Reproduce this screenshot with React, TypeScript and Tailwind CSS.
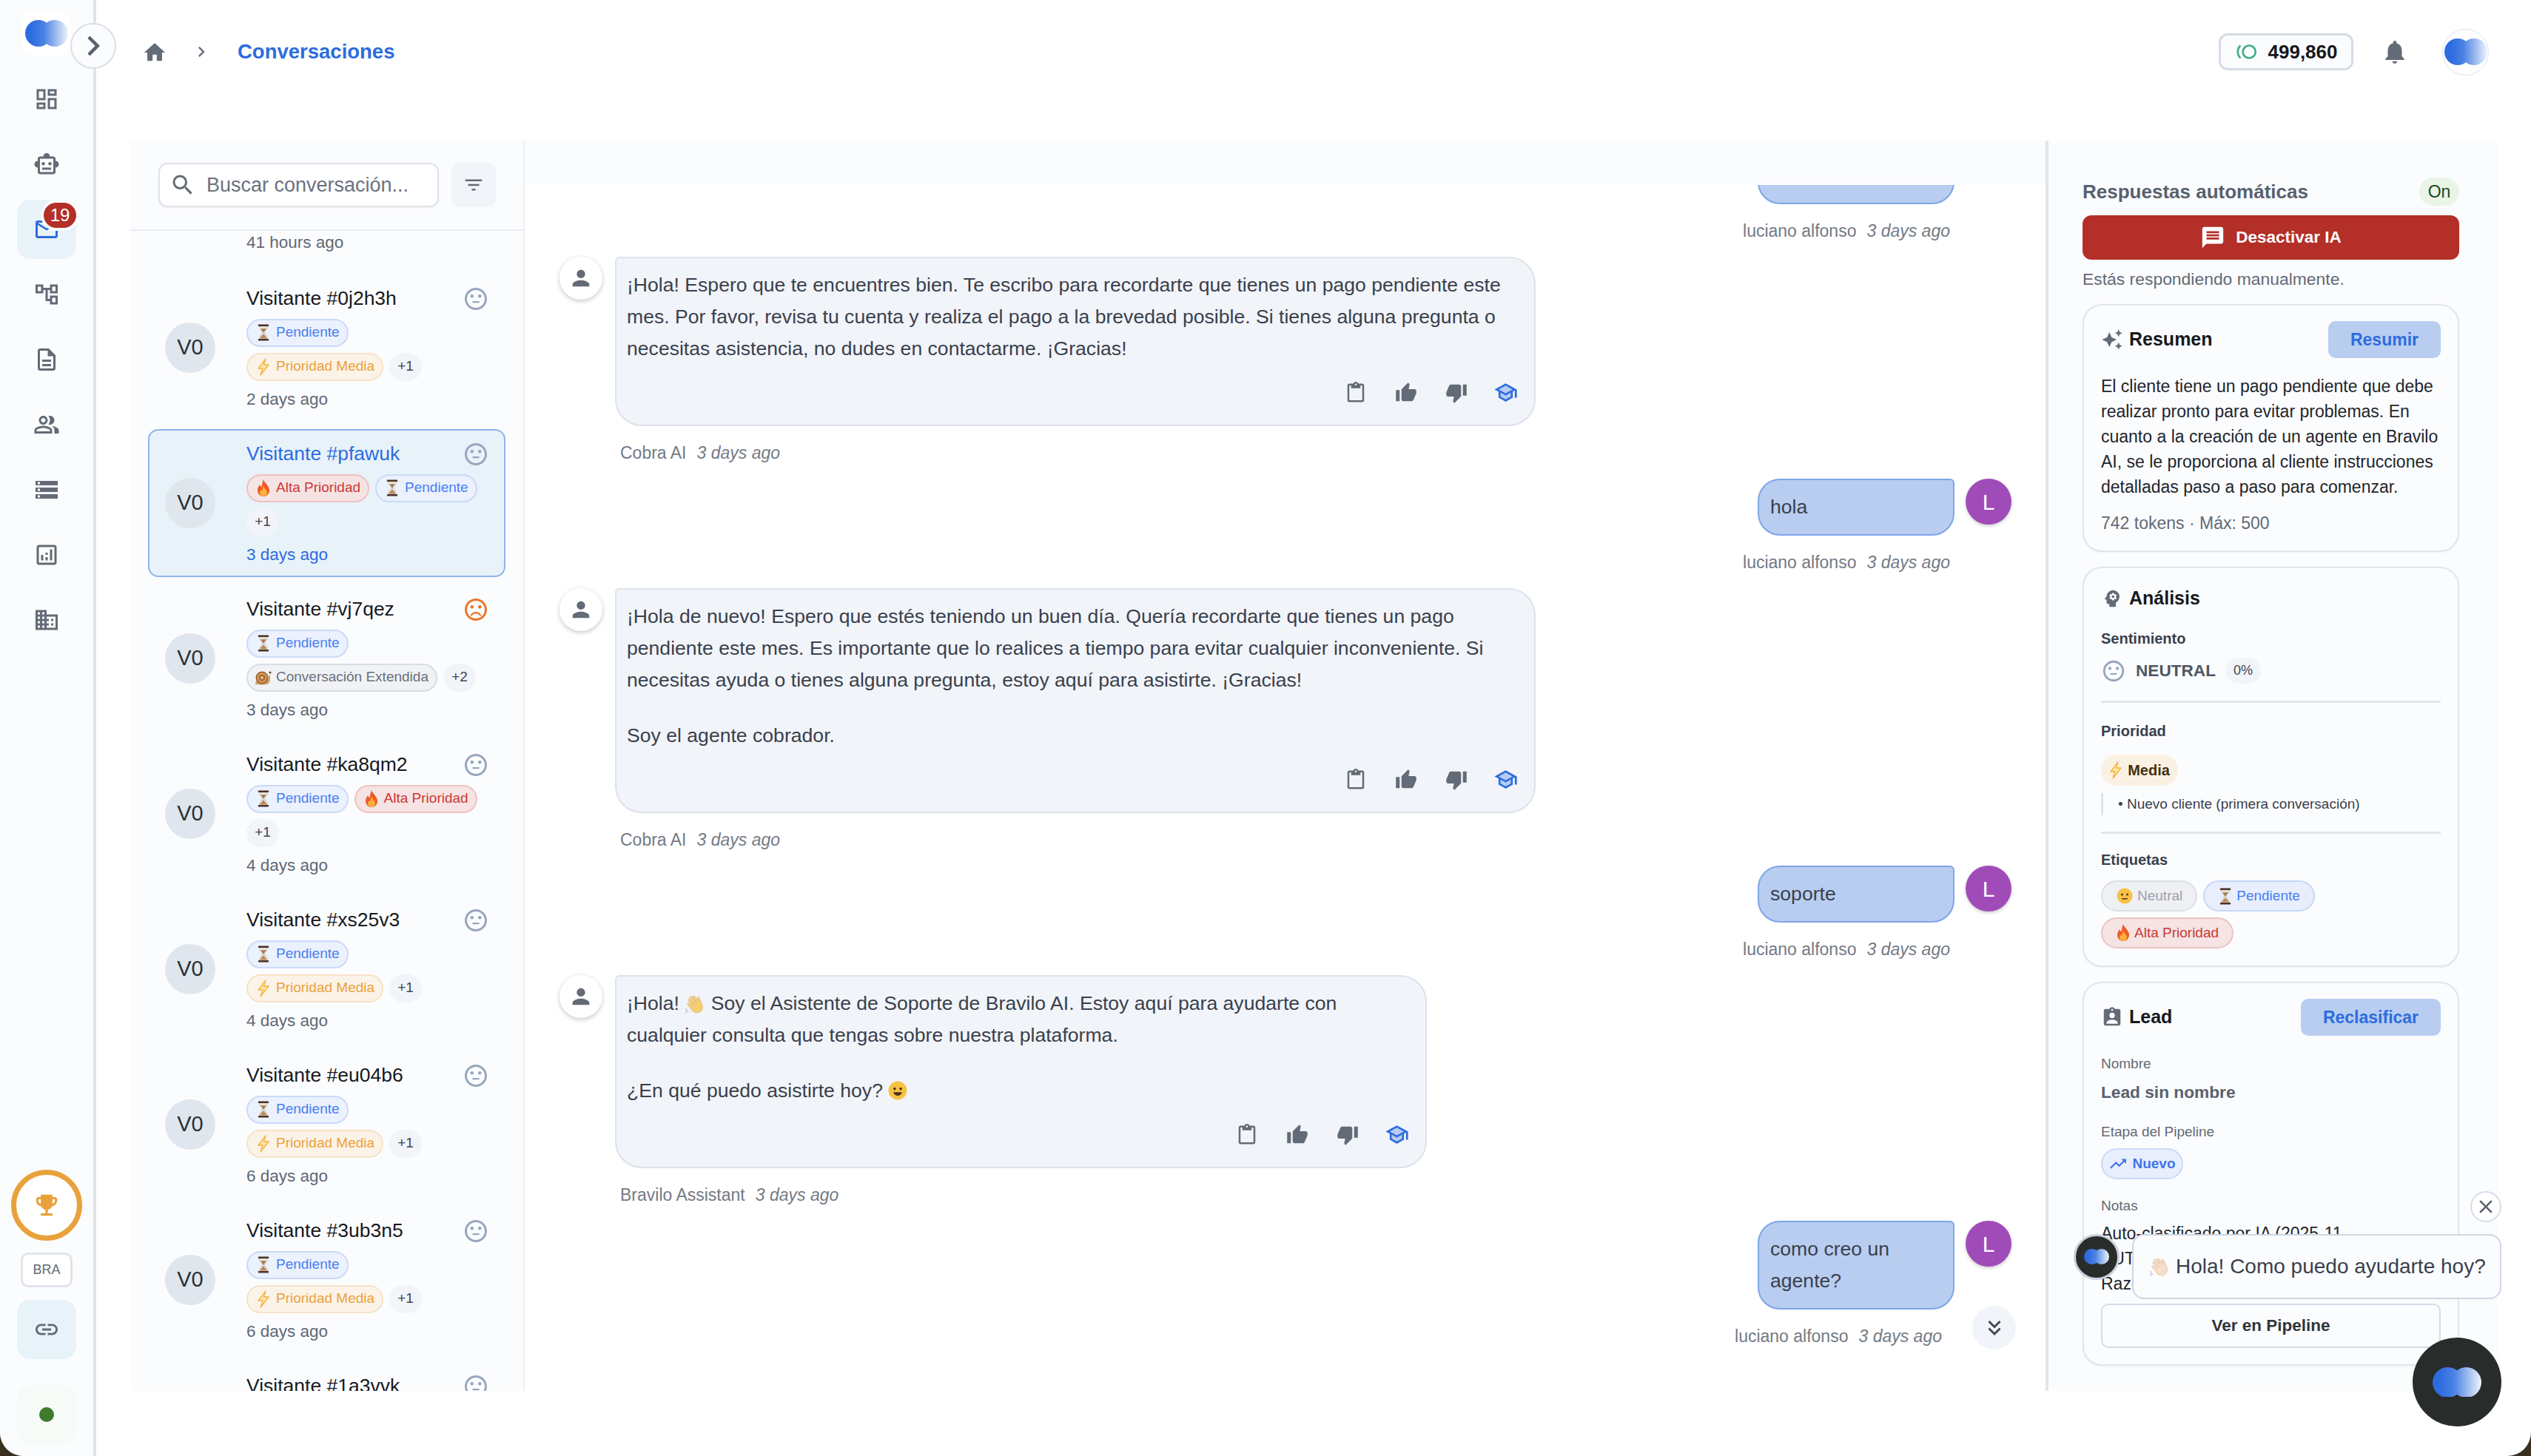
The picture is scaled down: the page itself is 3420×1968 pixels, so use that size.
import React from 'react';
import {
  MdOutlineDashboard, MdOutlineSmartToy, MdMailOutline, MdOutlineAccountTree, MdOutlineDescription,
  MdOutlinePeopleAlt, MdStorage, MdOutlineAnalytics, MdOutlineBusiness, MdHome, MdChevronRight,
  MdSearch, MdFilterList, MdOutlineSentimentNeutral, MdOutlineSentimentDissatisfied, MdNotifications,
  MdPerson, MdOutlineContentPaste, MdThumbUp, MdThumbDown, MdMessage, MdAutoAwesome,
  MdPsychology, MdAssignmentInd, MdTrendingUp, MdKeyboardDoubleArrowDown, MdEmojiEvents, MdLink, MdClose,
} from 'react-icons/md';

function Logo({ w = 58 }: { w?: number }) {
  const id = `logo-${w}`;
  return (
    <svg width={w} height={(w * 36) / 58} viewBox="0 0 58 36">
      <defs>
        <linearGradient id={id} gradientUnits="userSpaceOnUse" x1="8" y1="0" x2="58" y2="0">
          <stop offset="0" stopColor="#2d6cdf" />
          <stop offset="0.35" stopColor="#4a82e4" />
          <stop offset="1" stopColor="#eef3fb" />
        </linearGradient>
      </defs>
      <circle cx="18" cy="18" r="18" fill={`url(#${id})`} />
      <circle cx="40" cy="18" r="18" fill={`url(#${id})`} />
    </svg>
  );
}

// two-tone cap, the outlined icon with a pale fill under it
function SchoolIcon() {
  return (
    <svg width="33" height="33" viewBox="0 0 24 24" className="-ml-[3px] shrink-0">
      <path d="M7 12.27v3.72l5 2.73 5-2.73v-3.72L12 15zM12 5.28 5.18 9 12 12.72 18.82 9z" fill="#2d6cdf" opacity="0.3" />
      <path d="M12 3 1 9l4 2.18v6L12 21l7-3.82v-6l2-1.09V17h2V9L12 3zm6.82 6L12 12.72 5.18 9 12 5.28 18.82 9zM17 15.99l-5 2.73-5-2.73v-3.72L12 15l5-2.73v3.72z" fill="#2d6cdf" />
    </svg>
  );
}

function Hourglass() {
  return (
    <svg width="16" height="23" viewBox="0 0 18 26" className="shrink-0">
      <path d="M3 3h12c0 6-4 7-4.5 10 .5 3 4.5 4 4.5 10H3c0-6 4-7 4.5-10C7 10 3 9 3 3z" fill="#e8e4da" stroke="#b9b2a5" strokeWidth="0.8" />
      <path d="M5 7h8c-.8 2.500-3 3.500-3.500 6h-1C8 10.500 5.800 9.500 5 7z" fill="#a9794a" />
      <path d="M9 14c.4 3 4.500 4.500 5 8H4c.5-3.500 4.600-5 5-8z" fill="#b98a58" />
      <rect x="1" y="0.500" width="16" height="3" rx="1" fill="#4a3226" />
      <rect x="1" y="22.500" width="16" height="3" rx="1" fill="#4a3226" />
    </svg>
  );
}

function Bolt() {
  return (
    <svg width="18" height="24" viewBox="0 0 18 24" className="shrink-0">
      <path d="M12 1 2 14h6l-3 9 11-14h-6.500L12 1z" fill="#fde6a8" stroke="#f4b23e" strokeWidth="1.300" strokeLinejoin="round" />
    </svg>
  );
}

function Flame() {
  return (
    <svg width="18" height="24" viewBox="0 0 18 24" className="shrink-0">
      <path d="M9 0c1 5 8 8 8 15a8 8 0 0 1-16 0c0-4 2-6 3-8 .5 2 1.500 3 2.500 3C7.500 7 7.500 3 9 0z" fill="#ee5a24" />
      <path d="M9 9c.5 3 5 5 5 9a5 5 0 0 1-10 0c0-2 1-3 2-4 .5 1 1 1.500 1.500 1.500C7.500 13 8 11 9 9z" fill="#fbb03b" />
    </svg>
  );
}

function Snail() {
  return (
    <svg width="24" height="22" viewBox="0 0 24 22" className="shrink-0">
      <path d="M1 20c6 1 15 1 18-1 2-2 2-7 2-11h-2c0 4-1 6-3 7H2z" fill="#c9a06a" />
      <circle cx="10" cy="11" r="8.500" fill="#a8692f" />
      <circle cx="10" cy="11" r="5.500" fill="none" stroke="#e2b67c" strokeWidth="1.400" />
      <circle cx="10" cy="11" r="2.200" fill="#e2b67c" />
      <circle cx="21" cy="4" r="1.500" fill="#5b4026" />
    </svg>
  );
}

function FaceEmoji({ smile, size = 22 }: { smile?: boolean; size?: number }) {
  return (
    <svg width={size} height={size} viewBox="0 0 22 22" className="inline-block shrink-0 align-[-4px]">
      <circle cx="11" cy="11" r="10.500" fill="#f8c144" />
      <circle cx="7.500" cy="9" r="1.500" fill="#4a3220" />
      <circle cx="14.500" cy="9" r="1.500" fill="#4a3220" />
      {smile
        ? <path d="M6 13c1 3 3 4 5 4s4-1 5-4z" fill="#4a3220" />
        : <rect x="7" y="14" width="8" height="1.600" rx="0.800" fill="#4a3220" />}
    </svg>
  );
}

function WaveHand({ color = '#f6cc73', size = 28 }: { color?: string; size?: number }) {
  return (
    <svg width={size} height={size} viewBox="0 0 28 28" className="inline-block shrink-0 align-[-6px]">
      <path d="M7 6c-1-1.500 1-3 2.500-1.500L15 11l-4-6c-1-1.500 1.500-3 2.500-1.500L19 11l-2-5c-.6-1.600 1.800-2.600 2.500-1L24 15c2 6-2 11-7 11-4 0-6-2-9-6l-4-5c-1-1.500 1-3 2.500-1.700L11 17 5 9.500C4 8 6 6.500 7 8l6 6.500z" fill={color} stroke="#d9b48a" strokeWidth="0.600" />
      <path d="M2 20c.5 2 1.500 3.500 3 5M1 24c.4 1 1 1.500 2 2.500" stroke="#9aa3ad" strokeWidth="1" fill="none" />
    </svg>
  );
}

type ChipKind = 'pending' | 'media' | 'alta' | 'extended';

const chipStyles: Record<ChipKind, string> = {
  pending: 'bg-[#ebf1fd] border-[#cbdaf8] text-[#4a7df0]',
  media: 'bg-[#fbf3e8] border-[#f7e2c6] text-[#eca139]',
  alta: 'bg-[#f6e3e4] border-[#eec2c2] text-[#c93a35]',
  extended: 'bg-[#f1f2f5] border-[#d9dce2] text-[#68707c]',
};

const chipLabels: Record<ChipKind, string> = {
  pending: 'Pendiente',
  media: 'Prioridad Media',
  alta: 'Alta Prioridad',
  extended: 'Conversación Extendida',
};

function ChipIcon({ kind }: { kind: ChipKind }) {
  if (kind === 'pending') return <Hourglass />;
  if (kind === 'media') return <Bolt />;
  if (kind === 'alta') return <Flame />;
  return <Snail />;
}

function Chip({ kind }: { kind: ChipKind }) {
  return (
    <span className={`flex h-[38px] items-center gap-[6px] rounded-full border-2 pl-[10px] pr-[10px] text-[19px] whitespace-nowrap ${chipStyles[kind]}`}>
      <span className="flex w-[22px] justify-center"><ChipIcon kind={kind} /></span>
      {chipLabels[kind]}
    </span>
  );
}

type Conv = { id: string; chips: ChipKind[]; more: string; ago: string; mood?: 'sad'; active?: boolean };

const conversations: Conv[] = [
  { id: '0j2h3h', chips: ['pending', 'media'], more: '+1', ago: '2 days ago' },
  { id: 'pfawuk', chips: ['alta', 'pending'], more: '+1', ago: '3 days ago', active: true },
  { id: 'vj7qez', chips: ['pending', 'extended'], more: '+2', ago: '3 days ago', mood: 'sad' },
  { id: 'ka8qm2', chips: ['pending', 'alta'], more: '+1', ago: '4 days ago' },
  { id: 'xs25v3', chips: ['pending', 'media'], more: '+1', ago: '4 days ago' },
  { id: 'eu04b6', chips: ['pending', 'media'], more: '+1', ago: '6 days ago' },
  { id: '3ub3n5', chips: ['pending', 'media'], more: '+1', ago: '6 days ago' },
  { id: '1a3vvk', chips: ['pending', 'media'], more: '+1', ago: '6 days ago' },
];

function ConversationItem({ c }: { c: Conv }) {
  const Mood = c.mood === 'sad' ? MdOutlineSentimentDissatisfied : MdOutlineSentimentNeutral;
  return (
    <div className={`mx-[24px] mb-[10px] flex h-[200px] shrink-0 items-center rounded-[14px] border-2 pl-[21px] pr-[20px] ${c.active ? 'border-[#8fb4ec] bg-[#e8f2f9]' : 'border-transparent'}`}>
      <div className="flex size-[68px] shrink-0 items-center justify-center rounded-full bg-[#e0e6ed] text-[29px] font-medium text-[#2b3038]">V0</div>
      <div className="ml-[42px] min-w-0 flex-1 pt-[4px]">
        <div className="flex h-[30px] items-center justify-between">
          <span className={`text-[26.5px] ${c.active ? 'text-[#2d6cdf]' : 'text-[#17191d]'}`}>Visitante #{c.id}</span>
          <Mood size={36} className={c.mood === 'sad' ? 'text-[#e9762b]' : 'text-[#97a6bd]'} />
        </div>
        <div className="mt-[12px] flex flex-wrap gap-[8px]">
          {c.chips.map((k) => <Chip key={k} kind={k} />)}
          <span className="flex h-[38px] w-[44px] items-center justify-center rounded-full bg-[#f1f4f9] text-[19px] text-[#3f4650]">{c.more}</span>
        </div>
        <div className={`mt-[9px] text-[22.5px] leading-[32px] ${c.active ? 'text-[#2d6cdf]' : 'text-[#5f6875]'}`}>{c.ago}</div>
      </div>
    </div>
  );
}

function BotMessage({ author, width, children }: { author: string; width: string; children: React.ReactNode }) {
  return (
    <div className="flex shrink-0 items-start gap-[17px]">
      <div className="flex size-[58px] shrink-0 items-center justify-center rounded-full bg-white shadow-[0_2px_6px_rgba(0,0,0,0.22)]">
        <MdPerson size={34} className="text-[#636b76]" />
      </div>
      <div>
        <div className={`rounded-[36px] rounded-tl-[6px] border-2 border-[#dde2ea] bg-[#f1f4f9] pb-[27px] pl-[14px] pr-[22px] pt-[15px] text-[26.6px] leading-[43px] text-[#3a404c] ${width}`}>
          {children}
          <div className="mt-[21px] flex items-center justify-end gap-[38px] text-[#636b76]">
            <MdOutlineContentPaste size={30} />
            <MdThumbUp size={30} />
            <MdThumbDown size={30} />
            <SchoolIcon />
          </div>
        </div>
        <div className="mb-[20px] ml-[7px] mt-[21px] h-[30px] text-[23px] leading-[30px] text-[#737a85]">
          {author}<i className="ml-[14px]">3 days ago</i>
        </div>
      </div>
    </div>
  );
}

function UserMessage({ children, shifted, noAvatar }: { children?: React.ReactNode; shifted?: boolean; noAvatar?: boolean }) {
  return (
    <div className="shrink-0">
      <div className="flex items-start justify-end gap-[15px]">
        <div className="w-[266px] rounded-[30px] rounded-tr-[6px] border-2 border-[#7ea5e8] bg-[#b8cdf0] px-[15px] py-[15px] text-[26.6px] leading-[43px] text-[#3a404c]">{children}</div>
        <div className={`flex size-[62px] items-center justify-center rounded-full text-[30px] text-white ${noAvatar ? '' : 'bg-[#a04cb8] shadow-[0_2px_4px_rgba(0,0,0,0.2)]'}`}>{noAvatar ? '' : 'L'}</div>
      </div>
      <div className={`mb-[20px] mt-[21px] h-[30px] text-right text-[23px] leading-[30px] text-[#737a85] ${shifted ? 'pr-[94px]' : 'pr-[83px]'}`}>
        luciano alfonso<i className="ml-[14px]">3 days ago</i>
      </div>
    </div>
  );
}

function Card({ children }: { children: React.ReactNode }) {
  return <div className="mt-[20px] shrink-0 rounded-[26px] border-2 border-[#e1e5ec] bg-[#fbfcfe] px-[23px] shadow-[0_1px_3px_rgba(0,0,0,0.05)]">{children}</div>;
}

const navIcons = [
  MdOutlineDashboard, MdOutlineSmartToy, MdMailOutline, MdOutlineAccountTree, MdOutlineDescription,
  MdOutlinePeopleAlt, MdStorage, MdOutlineAnalytics, MdOutlineBusiness,
];

export default function App() {
  return (
    <div className="relative h-screen w-screen overflow-hidden bg-[#3a3020] font-['Liberation_Sans',sans-serif]">
      <div className="flex h-full w-full overflow-hidden rounded-b-[32px] bg-white">
        {/* Sidebar */}
        <aside className="relative flex w-[130px] shrink-0 flex-col items-center border-r-[4px] border-[#e0e3e8] bg-[#fbfcfe]">
          <div className="mt-[14px] flex h-[62px] w-[66px] items-center justify-center rounded-[16px] bg-white"><Logo /></div>
          <div className="mt-[18px] flex flex-col gap-[8px]">
            {navIcons.map((Icon, i) => (
              <div key={i} className={`relative flex size-[80px] items-center justify-center rounded-[18px] ${i === 2 ? 'bg-[#e8f2f9] text-[#2d6cdf]' : 'text-[#636b76]'}`}>
                <Icon size={36} />
                {i === 2 && (
                  <span className="absolute right-0 top-[4px] flex h-[34px] w-[44px] items-center justify-center rounded-full bg-[#b32f28] text-[24px] text-white ring-4 ring-[#fbfcfe]">19</span>
                )}
              </div>
            ))}
          </div>
          <div className="mt-auto flex flex-col items-center pb-[16px]">
            <div className="flex size-[96px] items-center justify-center rounded-full border-[7px] border-[#e9a23b] bg-white">
              <MdEmojiEvents size={38} className="text-[#e9a23b]" />
            </div>
            <div className="mt-[16px] flex h-[47px] w-[70px] items-center justify-center rounded-[10px] border-[3px] border-[#e1e4e9] bg-white text-[18px] text-[#636b76]">BRA</div>
            <div className="mt-[17px] flex size-[80px] items-center justify-center rounded-[18px] bg-[#e8f2f9]">
              <MdLink size={36} className="text-[#636b76]" />
            </div>
            <div className="mt-[35px] flex size-[80px] items-center justify-center rounded-[18px] bg-[#f7fbf7]">
              <span className="size-[20px] rounded-full bg-[#3f7a2f]" />
            </div>
          </div>
          <button className="absolute left-[95px] top-[31px] flex size-[62px] items-center justify-center rounded-full border-2 border-[#dcdfe4] bg-[#fbfcfe] text-[#5b636e]">
            <MdChevronRight size={54} />
          </button>
        </aside>

        <div className="flex min-w-0 flex-1 flex-col pl-[46px] pr-[45px]">
          {/* Top bar */}
          <header className="flex h-[190px] shrink-0 items-start">
            <div className="flex h-[140px] flex-1 items-center text-[#636b76]">
              <MdHome size={34} className="ml-[16px] mt-[2px]" />
              <MdChevronRight size={28} className="ml-[32px]" />
              <span className="ml-[35px] text-[27.5px] font-bold text-[#2d6cdf]">Conversaciones</span>
            </div>
            <div className="flex h-[140px] items-center">
              <div className="flex h-[50px] w-[182px] items-center justify-center gap-[13px] rounded-[12px] border-[3px] border-[#d6dce6] bg-[#fbfcfe] text-[26px] font-bold text-[#16181c]">
                <svg width="32" height="22" viewBox="0 0 30 20">
                  <circle cx="18" cy="10" r="8" fill="none" stroke="#3fae84" strokeWidth="2.500" />
                  <path d="M7 2a11 11 0 0 0 0 16" fill="none" stroke="#3fae84" strokeWidth="2.500" />
                </svg>
                499,860
              </div>
              <MdNotifications size={38} className="ml-[37px] text-[#636b76]" />
              <div className="ml-[45px] mr-[12px] flex size-[63px] items-center justify-center rounded-full border border-[#d5e2f6] bg-white"><Logo /></div>
            </div>
          </header>

          <div className="flex h-[1690px] shrink-0 overflow-hidden">
            {/* Conversation list */}
            <section className="flex w-[533px] shrink-0 flex-col border-r-2 border-[#eceef2] bg-[#fbfcfe]">
              <div className="flex h-[122px] shrink-0 items-center gap-[17px] border-b-2 border-[#e9ecf0] pl-[38px]">
                <div className="flex h-[60px] w-[379px] items-center rounded-[12px] border-2 border-[#dfe3ea] bg-white pl-[13px] shadow-[0_1px_2px_rgba(0,0,0,0.06)]">
                  <MdSearch size={36} className="text-[#636b76]" />
                  <span className="ml-[14px] text-[27px] text-[#6b7280]">Buscar conversación...</span>
                </div>
                <div className="flex size-[60px] items-center justify-center rounded-[12px] bg-[#f1f4f9]">
                  <MdFilterList size={30} className="text-[#636b76]" />
                </div>
              </div>
              <div className="flex min-h-0 flex-1 flex-col overflow-hidden">
                <div className="mb-[26px] h-[32px] shrink-0 pl-[157px] text-[22.5px] leading-[32px] text-[#5f6875]">41 hours ago</div>
                {conversations.map((c) => <ConversationItem key={c.id} c={c} />)}
              </div>
            </section>

            {/* Chat */}
            <section className="flex min-w-0 flex-1 flex-col bg-white">
              <div className="relative z-10 h-[60px] shrink-0 bg-[#fbfcfe]" />
              <div className="flex min-h-0 flex-1 flex-col justify-end overflow-hidden pb-[39px] pl-[47px] pr-[46px]">
                <UserMessage noAvatar>{'\u00A0'}</UserMessage>
                <BotMessage author="Cobra AI" width="w-[1244px]">
                  <p>¡Hola! Espero que te encuentres bien. Te escribo para recordarte que tienes un pago pendiente este mes. Por favor, revisa tu cuenta y realiza el pago a la brevedad posible. Si tienes alguna pregunta o necesitas asistencia, no dudes en contactarme. ¡Gracias!</p>
                </BotMessage>
                <UserMessage>hola</UserMessage>
                <BotMessage author="Cobra AI" width="w-[1244px]">
                  <p>¡Hola de nuevo! Espero que estés teniendo un buen día. Quería recordarte que tienes un pago pendiente este mes. Es importante que lo realices a tiempo para evitar cualquier inconveniente. Si necesitas ayuda o tienes alguna pregunta, estoy aquí para asistirte. ¡Gracias!</p>
                  <p className="mt-[32px]">Soy el agente cobrador.</p>
                </BotMessage>
                <UserMessage>soporte</UserMessage>
                <BotMessage author="Bravilo Assistant" width="w-[1097px]">
                  <p>¡Hola! <WaveHand /> Soy el Asistente de Soporte de Bravilo AI. Estoy aquí para ayudarte con cualquier consulta que tengas sobre nuestra plataforma.</p>
                  <p className="mt-[32px]">¿En qué puedo asistirte hoy? <FaceEmoji smile size={26} /></p>
                </BotMessage>
                <div className="relative shrink-0">
                  <UserMessage shifted>como creo un agente?</UserMessage>
                  <button className="absolute right-[-6px] top-[115px] flex size-[59px] items-center justify-center rounded-full bg-[#f1f4f9] text-[#3f4650]">
                    <MdKeyboardDoubleArrowDown size={34} />
                  </button>
                </div>
              </div>
            </section>

            {/* Details panel */}
            <section className="flex w-[611px] shrink-0 flex-col overflow-hidden border-l-[4px] border-[#e3e5e9] bg-[#fbfcfe] pl-[46px] pr-[52px]">
              <div className="mt-[50px] flex h-[38px] shrink-0 items-center justify-between">
                <span className="text-[26px] font-bold text-[#59616e]">Respuestas automáticas</span>
                <span className="flex h-[38px] w-[54px] items-center justify-center rounded-full bg-[#e8f5e7] text-[23px] text-[#1e4a1c]">On</span>
              </div>
              <button className="mt-[13px] flex h-[60px] shrink-0 items-center justify-center gap-[14px] rounded-[12px] bg-[#b32f28] text-[22.5px] font-bold text-white">
                <MdMessage size={34} />
                Desactivar IA
              </button>
              <div className="mt-[10px] h-[32px] shrink-0 text-[22.9px] leading-[32px] text-[#636a75]">Estás respondiendo manualmente.</div>
              <div className="mt-[-2px]">
                <Card>
                  <div className="mt-[21px] flex h-[50px] items-center justify-between">
                    <div className="flex items-center gap-[8px]">
                      <MdAutoAwesome size={30} className="text-[#636b76]" />
                      <span className="text-[25px] font-bold text-[#17191d]">Resumen</span>
                    </div>
                    <span className="flex h-[50px] w-[152px] items-center justify-center rounded-[10px] bg-[#b8cdf0] text-[23px] font-bold text-[#2d6cdf]">Resumir</span>
                  </div>
                  <p className="mt-[21px] text-[23px] leading-[34px] text-[#22252b]">El cliente tiene un pago pendiente que debe realizar pronto para evitar problemas. En cuanto a la creación de un agente en Bravilo AI, se le proporciona al cliente instrucciones detalladas paso a paso para comenzar.</p>
                  <div className="mb-[21px] mt-[16px] text-[23px] leading-[32px] text-[#636a75]">742 tokens · Máx: 500</div>
                </Card>
              </div>
              <Card>
                <div className="mt-[24px] flex h-[34px] items-center gap-[8px]">
                  <MdPsychology size={30} className="text-[#636b76]" />
                  <span className="text-[25px] font-bold text-[#17191d]">Análisis</span>
                </div>
                <div className="mt-[23px] text-[20px] font-bold leading-[28px] text-[#3a404c]">Sentimiento</div>
                <div className="mt-[12px] flex h-[35px] items-center">
                  <MdOutlineSentimentNeutral size={34} className="text-[#97a6bd]" />
                  <span className="ml-[13px] text-[22.6px] font-bold text-[#4f5763]">NEUTRAL</span>
                  <span className="ml-[13px] flex h-[35px] w-[48px] items-center justify-center rounded-full bg-[#f1f4f9] text-[18px] text-[#3f4650]">0%</span>
                </div>
                <div className="mt-[23px] h-[3px] bg-[#e3e5e9]" />
                <div className="mt-[24px] text-[20px] font-bold leading-[28px] text-[#3a404c]">Prioridad</div>
                <div className="mt-[18px] flex h-[42px] w-[104px] items-center justify-center gap-[7px] rounded-full bg-[#fbf1e3] text-[20px] font-bold text-[#43300f]">
                  <Bolt />
                  Media
                </div>
                <div className="mt-[10px] flex h-[30px] items-center border-l-[3px] border-[#e1e4e9] pl-[20px] text-[19px] text-[#3a404c]">• Nuevo cliente (primera conversación)</div>
                <div className="mt-[22px] h-[3px] bg-[#e3e5e9]" />
                <div className="mt-[21px] text-[20px] font-bold leading-[28px] text-[#3a404c]">Etiquetas</div>
                <div className="mb-[23px] mt-[14px] flex flex-wrap gap-[8px]">
                  <span className="flex h-[42px] items-center gap-[6px] rounded-full border-2 border-[#dcdee4] bg-[#eff0f4] pl-[19px] pr-[18px] text-[19px] text-[#9aa1ad]"><FaceEmoji />Neutral</span>
                  <span className="flex h-[42px] items-center gap-[7px] rounded-full border-2 border-[#c6d6f7] bg-[#e8eefc] pl-[20px] pr-[18px] text-[19px] text-[#4a7df0]"><Hourglass />Pendiente</span>
                  <span className="flex h-[42px] items-center gap-[6px] rounded-full border-2 border-[#eec2c2] bg-[#f6e3e4] pl-[19px] pr-[18px] text-[19px] text-[#c93a35]"><Flame />Alta Prioridad</span>
                </div>
              </Card>
              <Card>
                <div className="mt-[21px] flex h-[50px] items-center justify-between">
                  <div className="flex items-center gap-[8px]">
                    <MdAssignmentInd size={30} className="text-[#636b76]" />
                    <span className="text-[25px] font-bold text-[#17191d]">Lead</span>
                  </div>
                  <span className="flex h-[50px] w-[189px] items-center justify-center rounded-[10px] bg-[#b8cdf0] text-[23px] font-bold text-[#2d6cdf]">Reclasificar</span>
                </div>
                <div className="mt-[24px] text-[19px] leading-[28px] text-[#636a75]">Nombre</div>
                <div className="mt-[8px] text-[22.7px] font-bold leading-[32px] text-[#59616e]">Lead sin nombre</div>
                <div className="mt-[24px] text-[19px] leading-[28px] text-[#636a75]">Etapa del Pipeline</div>
                <div className="mt-[8px] flex h-[42px] w-[111px] items-center justify-center gap-[6px] rounded-full border-2 border-[#cbdaf8] bg-[#e8eefc] text-[19px] font-bold text-[#3f73ec]">
                  <MdTrendingUp size={26} />
                  Nuevo
                </div>
                <div className="mt-[22px] text-[19px] leading-[28px] text-[#636a75]">Notas</div>
                <div className="mt-[6px] text-[23px] leading-[34px] text-[#22252b]">
                  <div>Auto-clasificado por IA (2025-11-</div>
                  <div>AUTOMÁTICO</div>
                  <div>Razón: primera conversación</div>
                </div>
                <div className="mb-[22px] mt-[10px] flex h-[60px] items-center justify-center rounded-[10px] border-2 border-[#d6dce6] text-[22.5px] font-bold text-[#30353d]">Ver en Pipeline</div>
              </Card>
            </section>
          </div>
        </div>
      </div>

      {/* Floating assistant widget */}
      <button className="absolute left-[3338px] top-[1610px] flex size-[42px] items-center justify-center rounded-full border-2 border-[#d6dce6] bg-white text-[#59616e]">
        <MdClose size={30} />
      </button>
      <div className="absolute left-[2881px] top-[1668px] flex h-[88px] w-[499px] items-center gap-[8px] whitespace-nowrap rounded-[16px] border-2 border-[#cdd6e4] bg-[#fbfcfe] pl-[21px] text-[28px] text-[#3a404c]">
        <WaveHand color="#f6dfc8" size={28} />
        Hola! Como puedo ayudarte hoy?
      </div>
      <div className="absolute left-[2802px] top-[1668px] flex size-[62px] items-center justify-center rounded-full border-[3px] border-[#c8d0dc] bg-[#2a2c2c]"><Logo w={34} /></div>
      <div className="absolute left-[3260px] top-[1808px] flex size-[120px] items-center justify-center rounded-full bg-[#282c2b]"><Logo w={66} /></div>
    </div>
  );
}
